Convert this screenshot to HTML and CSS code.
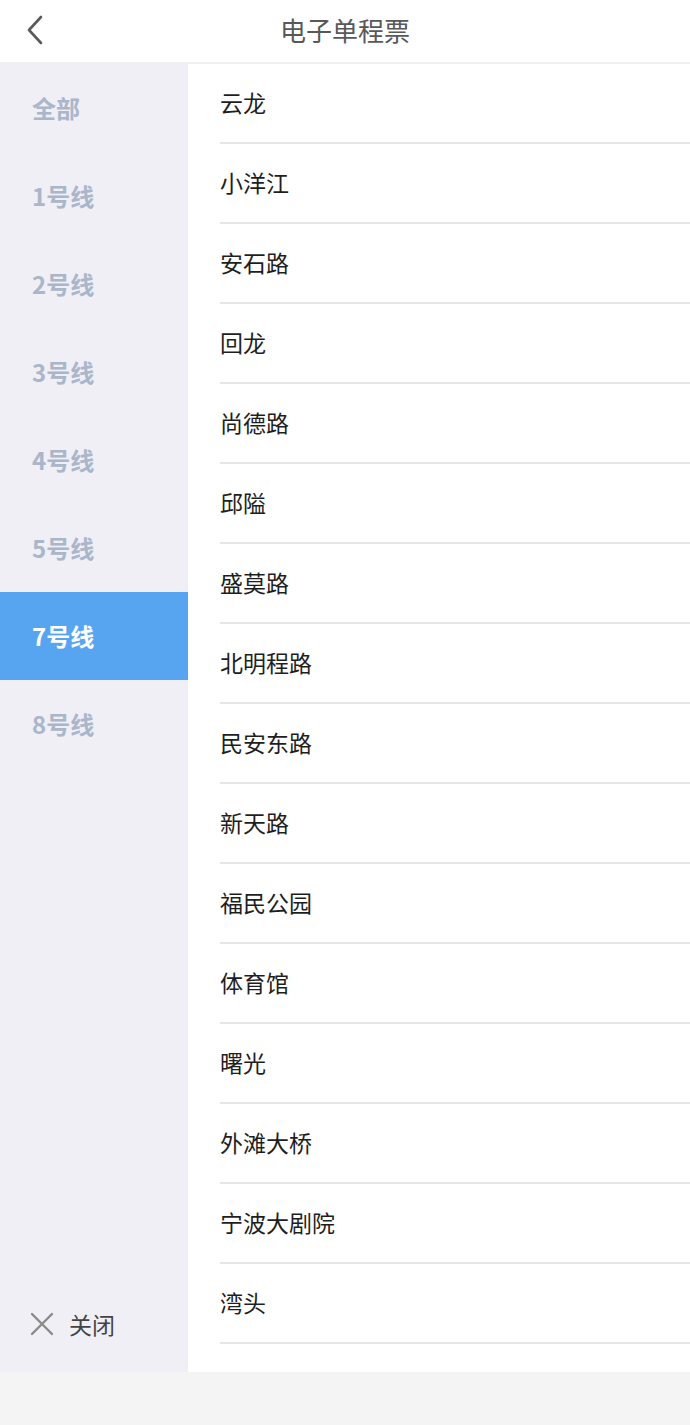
FILE: index.html
```html
<!DOCTYPE html>
<html lang="zh">
<head>
<meta charset="utf-8">
<title>电子单程票</title>
<link rel="stylesheet" href="styles.css">
</head>
<body>
<div class="page">
  <header class="topbar">
    <div class="back">
      <svg width="20" height="30" viewBox="0 0 20 30"><polyline points="16,2 4,15 16,28" fill="none" stroke="#5a5a5a" stroke-width="2.6" stroke-linecap="round" stroke-linejoin="round"/></svg>
    </div>
    <div class="title">电子单程票</div>
  </header>
  <div class="main">
    <nav class="sidebar">
      <div class="line">全部</div>
      <div class="line">1号线</div>
      <div class="line">2号线</div>
      <div class="line">3号线</div>
      <div class="line">4号线</div>
      <div class="line">5号线</div>
      <div class="line active">7号线</div>
      <div class="line">8号线</div>
      <div class="close">
        <svg width="24" height="24" viewBox="0 0 24 24"><path d="M2 2 L22 22 M22 2 L2 22" stroke="#8a8a8a" stroke-width="2.4" stroke-linecap="round"/></svg>
        <span>关闭</span>
      </div>
    </nav>
    <ul class="stations">
      <li>云龙</li>
      <li>小洋江</li>
      <li>安石路</li>
      <li>回龙</li>
      <li>尚德路</li>
      <li>邱隘</li>
      <li>盛莫路</li>
      <li>北明程路</li>
      <li>民安东路</li>
      <li>新天路</li>
      <li>福民公园</li>
      <li>体育馆</li>
      <li>曙光</li>
      <li>外滩大桥</li>
      <li>宁波大剧院</li>
      <li>湾头</li>
      <li class="partial"></li>
    </ul>
  </div>
  <footer class="bottombar"></footer>
</div>
</body>
</html>
```
FILE: styles.css
```css
* { box-sizing: border-box; margin: 0; padding: 0; }
html, body { width: 690px; height: 1425px; overflow: hidden; }
body {
  font-family: "Noto Sans CJK SC", "Noto Sans", sans-serif;
  background: #ffffff;
}
.page { display: flex; flex-direction: column; height: 1425px; }
.topbar {
  height: 64px;
  flex: none;
  display: flex;
  align-items: center;
  justify-content: center;
  position: relative;
  background: #fff;
  border-bottom: 2px solid #efeff2;
}
.back {
  position: absolute;
  left: 25px;
  top: 15px;
  width: 20px;
  height: 30px;
}
.title {
  font-size: 26px;
  color: #585858;
  line-height: 1;
  margin-top: -2px;
}
.main {
  flex: 1;
  display: flex;
  overflow: hidden;
  min-height: 0;
}
.sidebar {
  width: 188px;
  flex: none;
  background: #efeff5;
  display: flex;
  flex-direction: column;
}
.line {
  height: 88px;
  display: flex;
  align-items: center;
  padding-left: 32px;
  padding-bottom: 2px;
  font-size: 24px;
  font-weight: 700;
  color: #aab6c9;
}
.line.active { background: #57a5f1; color: #ffffff; }
.close {
  margin-top: auto;
  height: 94px;
  display: flex;
  align-items: center;
  padding-left: 30px;
  gap: 15px;
  font-size: 23px;
  color: #444;
  padding-bottom: 2px;
}
.stations {
  list-style: none;
  flex: 1;
  padding-left: 32px;
  overflow: hidden;
}
.stations li {
  height: 80px;
  display: flex;
  align-items: center;
  font-size: 23px;
  color: #1e1e1e;
  border-bottom: 2px solid #e6e6e8;
  padding-bottom: 2px;
}
.bottombar {
  height: 53px;
  flex: none;
  background: #f4f4f5;
}
```
